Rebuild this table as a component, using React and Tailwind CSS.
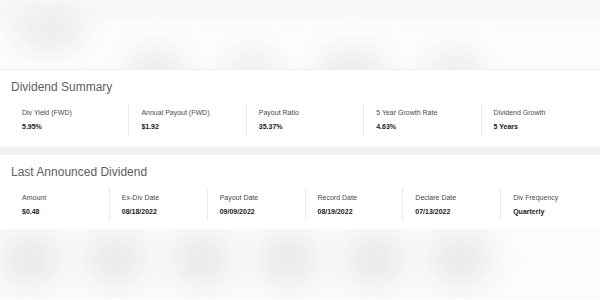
const summary = [
  { label: "Div Yield (FWD)", value: "5.95%" },
  { label: "Annual Payout (FWD)", value: "$1.92" },
  { label: "Payout Ratio", value: "35.37%" },
  { label: "5 Year Growth Rate", value: "4.63%" },
  { label: "Dividend Growth", value: "5 Years" },
];

const announced = [
  { label: "Amount", value: "$0.48" },
  { label: "Ex-Div Date", value: "08/18/2022" },
  { label: "Payout Date", value: "09/09/2022" },
  { label: "Record Date", value: "08/19/2022" },
  { label: "Declare Date", value: "07/13/2022" },
  { label: "Div Frequency", value: "Quarterly" },
];

function Section({ title, items, cols, bottom }) {
  return (
    <section className={`bg-white pt-[10px] ${bottom}`}>
      <h2 className="pl-[11px] text-[12px] leading-[14px] text-[#5e5e5e]">{title}</h2>
      <div className={`mt-[9px] ml-[11px] mr-[2px] grid ${cols}`}>
        {items.map((item, idx) => (
          <div
            key={item.label}
            className={`h-[33px] pt-[5px] ${
              idx === 0 ? "pl-[11px]" : "border-l border-[#ececef] pl-[12px]"
            }`}
          >
            <div className="text-[7px] leading-[10px] text-[#4a4a4a]">{item.label}</div>
            <div className="mt-[4px] text-[7px] leading-[10px] font-bold text-[#1a1a1a]">
              {item.value}
            </div>
          </div>
        ))}
      </div>
    </section>
  );
}

function BlurredHeader() {
  return (
    <div className="h-[69px] overflow-hidden bg-[#fdfdfd]">
      <div className="-mx-4 h-[20px] bg-[#f6f6f8] blur-[8px]" />
      <div className="flex h-[49px]">
        <div className="ml-[14px] mt-[-10px] h-[40px] w-[70px] rounded-full bg-[#ebebed] blur-[14px]" />
        <div className="flex items-end gap-[36px] pl-[40px]">
          <div className="mb-[-22px] h-[40px] w-[64px] rounded-full bg-[#ebebed] blur-[14px]" />
          <div className="mb-[-22px] h-[40px] w-[56px] rounded-full bg-[#ececee] blur-[14px]" />
          <div className="mb-[-22px] h-[40px] w-[72px] rounded-full bg-[#ebebed] blur-[14px]" />
          <div className="mb-[-22px] h-[40px] w-[60px] rounded-full bg-[#ececee] blur-[14px]" />
        </div>
      </div>
    </div>
  );
}

function BlurredFooter() {
  return (
    <div className="h-[70px] overflow-hidden bg-[#fcfcfc]">
      <div className="mt-[4px] flex gap-[26px] pl-[0px]">
        {[0, 1, 2, 3, 4, 5].map((i) => (
          <div key={i} className="h-[52px] w-[60px] rounded-full bg-[#e7e7e7] blur-[16px]" />
        ))}
      </div>
    </div>
  );
}

export default function App() {
  return (
    <div className="h-[300px] w-[600px] overflow-hidden bg-white font-['Liberation_Sans',Arial,sans-serif]">
      <BlurredHeader />
      <div className="h-px bg-[#f0f0f2]" />
      <Section title="Dividend Summary" items={summary} cols="grid-cols-5" bottom="pb-[11px]" />
      <div className="h-[8px] bg-[#f2f2f5]" />
      <Section title="Last Announced Dividend" items={announced} cols="grid-cols-6" bottom="pb-[8px]" />
      <BlurredFooter />
    </div>
  );
}
